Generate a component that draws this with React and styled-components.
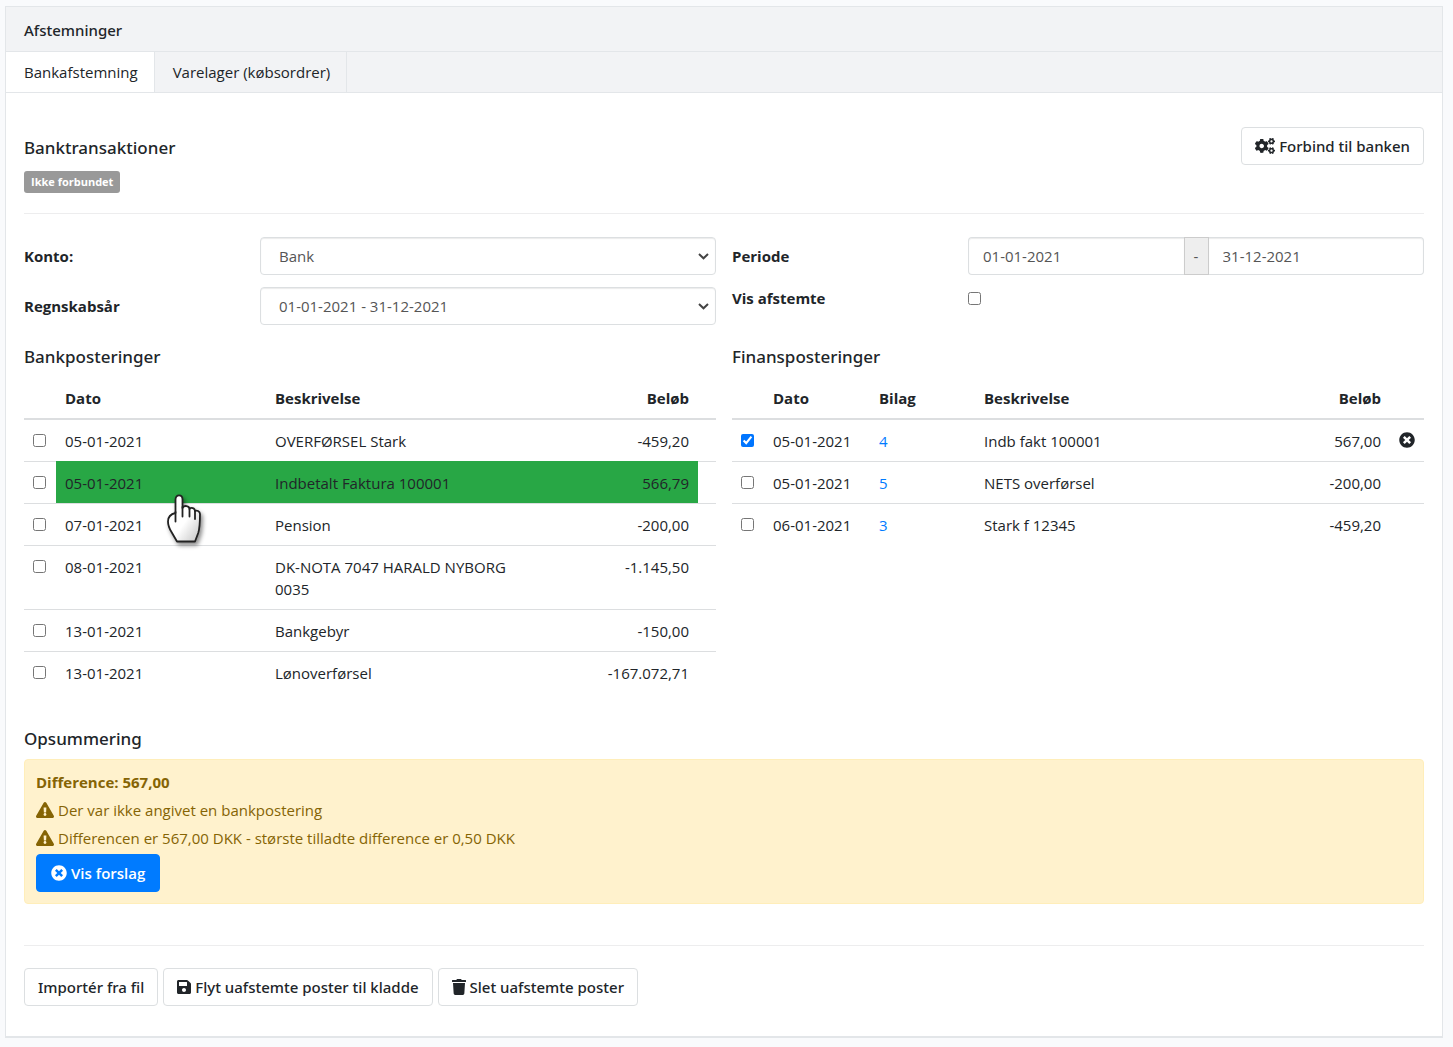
import React, { useState } from "react";
import styled, { createGlobalStyle, css } from "styled-components";
import {
  FaCogs,
  FaExclamationTriangle,
  FaSave,
  FaTimesCircle,
  FaTrash,
} from "react-icons/fa";

const GlobalStyle = createGlobalStyle`
  *,
  *::before,
  *::after {
    box-sizing: border-box;
  }

  body {
    margin: 0;
    background: #f9fafc;
    color: #212529;
    font-family: "Open Sans", "Noto Sans", sans-serif;
    font-size: 15px;
    line-height: 22px;
  }

  button,
  input,
  select {
    font: inherit;
  }
`;

const mediumText = css`
  font-family: "Noto Sans", "Open Sans", sans-serif;
  font-weight: 500;
`;

const Card = styled.main`
  margin: 6px 10px 9px 5px;
  background: #fff;
  border: 1px solid #e3e6e9;
  border-bottom-width: 2px;
`;

const CardHeader = styled.header`
  padding: 12px 18px 10px;
  background: #f2f3f5;
  border-bottom: 1px solid #e3e6e9;

  h1 {
    ${mediumText}
    margin: 0;
    font-size: 15px;
    line-height: 22px;
  }
`;

const Tabs = styled.nav`
  display: flex;
  background: #f2f3f5;
  border-bottom: 1px solid #e3e6e9;
`;

const Tab = styled.a`
  padding: 9px 16px 9px 18px;
  border-right: 1px solid #e3e6e9;
  background: ${(props) => (props.$active ? "#fff" : "transparent")};
  color: #212529;
  text-decoration: none;
`;

const CardBody = styled.div`
  padding: 34px 18px 30px;
`;

const TopBar = styled.div`
  display: flex;
  align-items: flex-start;
  justify-content: space-between;
`;

const Title = styled.h2`
  ${mediumText}
  margin: 0;
  font-size: 17px;
  line-height: 22px;
`;

const Status = styled.div`
  padding-top: 10px;
`;

const Badge = styled.span`
  display: block;
  width: fit-content;
  margin-top: 12px;
  padding: 0 7px;
  border-radius: 3px;
  background: #999;
  color: #fff;
  font-size: 11px;
  font-weight: 700;
  line-height: 22px;
`;

const Divider = styled.hr`
  margin: ${(props) => props.$top}px 0 ${(props) => props.$bottom}px;
  border: 0;
  border-top: 1px solid #ededee;
`;

const Button = styled.button`
  ${mediumText}
  display: inline-flex;
  align-items: center;
  gap: 4px;
  height: 38px;
  padding: 0 13px;
  border: 1px solid #dcdfe1;
  border-radius: 4px;
  background: #fff;
  color: #212529;
  white-space: nowrap;
  cursor: pointer;

  svg {
    flex: none;
    width: ${(props) => props.$iconWidth || 16}px;
  }

  ${(props) =>
    props.$primary &&
    css`
      padding: 0 14px;
      border-color: #007bff;
      background: #007bff;
      color: #fff;
      font-family: inherit;
      font-weight: 600;
    `}
`;

const Columns = styled.div`
  display: grid;
  grid-template-columns: 1fr 1fr;
  gap: 21px 16px;
`;

const Fields = styled.div`
  display: grid;
  grid-template-columns: calc((100% + 16px) / 3) 1fr;
  grid-template-rows: 38px auto;
  row-gap: 12px;
  align-items: center;
  align-content: start;

  label {
    font-weight: 700;
  }
`;

const fieldLook = css`
  width: 100%;
  min-width: 0;
  height: 38px;
  border: 1px solid #dcdfe1;
  border-radius: 4px;
  background: #fff;
  box-shadow: inset 0 1px 1px rgba(0, 0, 0, 0.08);
  color: #555;
`;

const SelectBox = styled.div`
  display: grid;
  align-items: center;

  select,
  svg {
    grid-area: 1 / 1;
  }

  svg {
    justify-self: end;
    margin-right: 7px;
    pointer-events: none;
  }
`;

const Select = styled.select`
  ${fieldLook}
  appearance: none;
  padding: 0 28px 0 18px;
`;

const DateRange = styled.div`
  display: flex;

  span {
    flex: none;
    width: 25px;
    border: 1px solid #ccc;
    background: #eee;
    color: #555;
    line-height: 36px;
    text-align: center;
  }
`;

const DateInput = styled.input`
  ${fieldLook}
  flex: 1;
  padding: 0 14px;

  &:first-child {
    border-right: 0;
    border-radius: 4px 0 0 4px;
  }

  &:last-child {
    border-left: 0;
    border-radius: 0 4px 4px 0;
  }
`;

const CheckRow = styled.div`
  display: grid;
  grid-column: 1 / -1;
  grid-template-columns: subgrid;
  align-items: center;
`;

const Checkbox = styled.input.attrs({ type: "checkbox" })`
  display: block;
  width: 13px;
  height: 13px;
  margin: 0;
  accent-color: #0075ff;
`;

const Table = styled.table`
  width: 100%;
  margin-top: 10px;
  border-collapse: separate;
  border-spacing: 0;
  table-layout: fixed;

  th,
  td {
    padding: 10px 9px 9px;
    border-top: 1px solid #dcdee0;
    text-align: left;
    vertical-align: top;
  }

  th {
    padding: 9px;
    border-top: 0;
    border-bottom: 2px solid #dcdee0;
    font-weight: 700;
  }

  tbody tr:first-child td {
    border-top: 0;
  }

  td:first-child {
    padding: 14px 9px 0;
  }

  .amount {
    text-align: right;
  }

  a {
    color: #007bff;
    text-decoration: none;
  }
`;

const Row = styled.tr`
  ${(props) =>
    props.$hovered &&
    css`
      td:not(:first-child):not(:last-child) {
        background: #28a745;
        border-color: #28a745;
      }
    `}
`;

const DateCell = styled.td`
  position: relative;
`;

const Pointer = styled.svg`
  position: absolute;
  top: 32px;
  left: 111px;
  z-index: 1;
  overflow: visible;
  filter: drop-shadow(2px 3px 2px rgba(0, 0, 0, 0.45));
  pointer-events: none;
`;

const RemoveButton = styled.button`
  display: block;
  margin: 2px 0;
  padding: 0;
  border: 0;
  background: none;
  color: #212529;
  line-height: 0;
  cursor: pointer;
`;

const Summary = styled.section`
  margin-top: 35px;
`;

const Alert = styled.div`
  margin-top: 9px;
  padding: 8px 11px 11px;
  border: 1px solid #ffeeba;
  border-radius: 4px;
  background: #fff2cd;
  color: #856404;

  p {
    display: flex;
    align-items: center;
    gap: 4px;
    margin: 0;
    line-height: 28px;
  }

  p:last-of-type {
    margin-bottom: 2px;
  }
`;

const Actions = styled.div`
  display: flex;
  gap: 5px;
`;

const bankRows = [
  { id: 1, date: "05-01-2021", text: "OVERFØRSEL Stark", amount: "-459,20" },
  { id: 2, date: "05-01-2021", text: "Indbetalt Faktura 100001", amount: "566,79", hovered: true },
  { id: 3, date: "07-01-2021", text: "Pension", amount: "-200,00" },
  { id: 4, date: "08-01-2021", text: "DK-NOTA 7047 HARALD NYBORG 0035", amount: "-1.145,50" },
  { id: 5, date: "13-01-2021", text: "Bankgebyr", amount: "-150,00" },
  { id: 6, date: "13-01-2021", text: "Lønoverførsel", amount: "-167.072,71" },
];

const financeRows = [
  { id: 1, date: "05-01-2021", voucher: 4, text: "Indb fakt 100001", amount: "567,00" },
  { id: 2, date: "05-01-2021", voucher: 5, text: "NETS overførsel", amount: "-200,00" },
  { id: 3, date: "06-01-2021", voucher: 3, text: "Stark f 12345", amount: "-459,20" },
];

function SelectField({ id, children }) {
  return (
    <SelectBox>
      <Select id={id}>{children}</Select>
      <svg width="11" height="7" viewBox="0 0 11 7" aria-hidden="true">
        <path d="M1 1l4.500 4.300L10 1" fill="none" stroke="#444" strokeWidth="2" />
      </svg>
    </SelectBox>
  );
}

function HandPointer() {
  return (
    <Pointer width="36" height="51" viewBox="0 0 36 51" aria-hidden="true">
      <defs>
        <linearGradient id="hand" x1="0" y1="0" x2="1" y2="1">
          <stop offset="0.55" stopColor="#fff" />
          <stop offset="0.9" stopColor="#cfcfcf" />
        </linearGradient>
      </defs>
      <path
        d="M8.500 19V5.500C8.500 0 15.500 0 15.500 5.500V14c1.500-3 7-2.500 7 1 1.500-2 5.500-1 5.500 2 1.500-1 5 0 5 3 0 9-.5 15-1.800 19L28 47.500H10L4.500 38C2 34 1 31 1 27.500c0-4.500 3-7.500 7.500-8.500z"
        fill="url(#hand)"
        stroke="#222"
        strokeWidth="1.800"
        strokeLinejoin="round"
      />
      <path
        d="M8.500 18v9.500M15.500 13v9.500M22.500 15v7.500M28 17v8"
        fill="none"
        stroke="#222"
        strokeWidth="1.800"
        strokeLinecap="round"
      />
    </Pointer>
  );
}

function BankTable() {
  return (
    <Table>
      <colgroup>
        <col style={{ width: "32px" }} />
        <col style={{ width: "210px" }} />
        <col />
        <col style={{ width: "24%" }} />
        <col style={{ width: "18px" }} />
      </colgroup>
      <thead>
        <tr>
          <th />
          <th>Dato</th>
          <th>Beskrivelse</th>
          <th className="amount">Beløb</th>
          <th />
        </tr>
      </thead>
      <tbody>
        {bankRows.map((row) => (
          <Row key={row.id} $hovered={row.hovered}>
            <td>
              <Checkbox aria-label={row.text} />
            </td>
            <DateCell>
              {row.date}
              {row.hovered && <HandPointer />}
            </DateCell>
            <td>{row.text}</td>
            <td className="amount">{row.amount}</td>
            <td />
          </Row>
        ))}
      </tbody>
    </Table>
  );
}

function FinanceTable() {
  const [selected, setSelected] = useState(1);

  return (
    <Table>
      <colgroup>
        <col style={{ width: "32px" }} />
        <col style={{ width: "106px" }} />
        <col style={{ width: "105px" }} />
        <col />
        <col style={{ width: "24%" }} />
        <col style={{ width: "34px" }} />
      </colgroup>
      <thead>
        <tr>
          <th />
          <th>Dato</th>
          <th>Bilag</th>
          <th>Beskrivelse</th>
          <th className="amount">Beløb</th>
          <th />
        </tr>
      </thead>
      <tbody>
        {financeRows.map((row) => (
          <Row key={row.id}>
            <td>
              <Checkbox
                aria-label={row.text}
                checked={selected === row.id}
                onChange={() => setSelected(selected === row.id ? null : row.id)}
              />
            </td>
            <td>{row.date}</td>
            <td>
              <a href={`#bilag-${row.voucher}`}>{row.voucher}</a>
            </td>
            <td>{row.text}</td>
            <td className="amount">{row.amount}</td>
            <td>
              {selected === row.id && (
                <RemoveButton aria-label="Fjern" onClick={() => setSelected(null)}>
                  <FaTimesCircle size={16} />
                </RemoveButton>
              )}
            </td>
          </Row>
        ))}
      </tbody>
    </Table>
  );
}

function App() {
  return (
    <>
      <GlobalStyle />
      <Card>
        <CardHeader>
          <h1>Afstemninger</h1>
        </CardHeader>
        <Tabs>
          <Tab href="#bank" $active>
            Bankafstemning
          </Tab>
          <Tab href="#varelager">Varelager (købsordrer)</Tab>
        </Tabs>
        <CardBody>
          <TopBar>
            <Status>
              <Title>Banktransaktioner</Title>
              <Badge>Ikke forbundet</Badge>
            </Status>
            <Button $iconWidth={20}>
              <FaCogs size={20} />
              Forbind til banken
            </Button>
          </TopBar>
          <Divider $top={20} $bottom={23} />
          <Columns>
            <Fields>
              <label htmlFor="konto">Konto:</label>
              <SelectField id="konto">
                <option>Bank</option>
              </SelectField>
              <label htmlFor="aar">Regnskabsår</label>
              <SelectField id="aar">
                <option>01-01-2021 - 31-12-2021</option>
              </SelectField>
            </Fields>
            <Fields>
              <label htmlFor="fra">Periode</label>
              <DateRange>
                <DateInput id="fra" defaultValue="01-01-2021" />
                <span>-</span>
                <DateInput aria-label="Periode til" defaultValue="31-12-2021" />
              </DateRange>
              <CheckRow>
                <label htmlFor="vis">Vis afstemte</label>
                <Checkbox id="vis" />
              </CheckRow>
            </Fields>
            <section>
              <Title>Bankposteringer</Title>
              <BankTable />
            </section>
            <section>
              <Title>Finansposteringer</Title>
              <FinanceTable />
            </section>
          </Columns>
          <Summary>
            <Title>Opsummering</Title>
            <Alert>
              <p>
                <strong>Difference: 567,00</strong>
              </p>
              <p>
                <FaExclamationTriangle size={18} />
                Der var ikke angivet en bankpostering
              </p>
              <p>
                <FaExclamationTriangle size={18} />
                Differencen er 567,00 DKK - største tilladte difference er 0,50 DKK
              </p>
              <Button $primary>
                <FaTimesCircle size={16} />
                Vis forslag
              </Button>
            </Alert>
          </Summary>
          <Divider $top={41} $bottom={22} />
          <Actions>
            <Button>Importér fra fil</Button>
            <Button $iconWidth={14}>
              <FaSave size={16} preserveAspectRatio="xMidYMid slice" />
              Flyt uafstemte poster til kladde
            </Button>
            <Button $iconWidth={14}>
              <FaTrash size={16} preserveAspectRatio="xMidYMid slice" />
              Slet uafstemte poster
            </Button>
          </Actions>
        </CardBody>
      </Card>
    </>
  );
}

export default App;
